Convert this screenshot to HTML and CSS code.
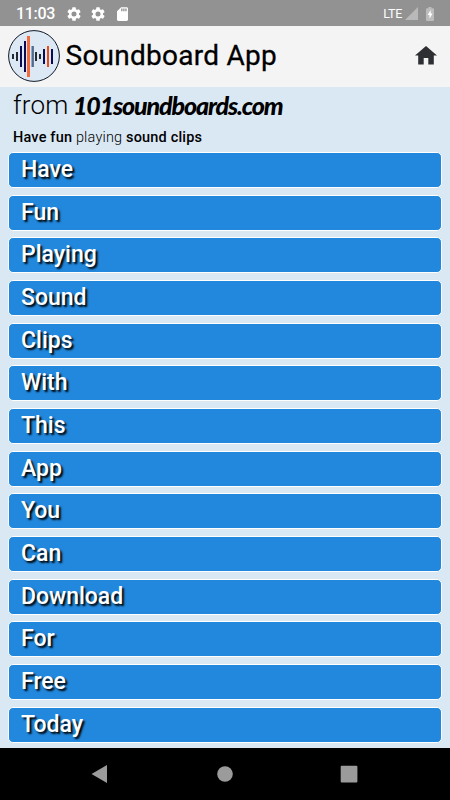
FILE: index.html
```html
<!DOCTYPE html>
<html lang="en">
<head>
<meta charset="utf-8">
<title>Soundboard App</title>
<link rel="stylesheet" href="styles.css">
</head>
<body>
<div class="status">
  <span class="time">11:03</span>
  <svg class="gear" viewBox="2 2 20 20"><path d="M19.14 12.94c.04-.3.06-.61.06-.94s-.02-.64-.07-.94l2.03-1.58a.49.49 0 0 0 .12-.61l-1.92-3.32a.49.49 0 0 0-.59-.22l-2.39.96a7 7 0 0 0-1.62-.94L14.4 2.81a.48.48 0 0 0-.48-.41h-3.84a.47.47 0 0 0-.47.41l-.36 2.54c-.59.24-1.13.57-1.62.94l-2.39-.96a.48.48 0 0 0-.59.22L2.74 8.87a.47.47 0 0 0 .12.61l2.03 1.58a6 6 0 0 0 0 1.88l-2.03 1.58a.49.49 0 0 0-.12.61l1.92 3.32c.12.22.37.29.59.22l2.39-.96c.5.38 1.03.7 1.62.94l.36 2.54c.05.24.24.41.48.41h3.84c.24 0 .44-.17.47-.41l.36-2.54a7 7 0 0 0 1.62-.94l2.39.96c.22.08.47 0 .59-.22l1.92-3.32a.47.47 0 0 0-.12-.61zM12 15.6a3.6 3.6 0 1 1 0-7.2 3.6 3.6 0 0 1 0 7.2z"/></svg>
  <svg class="gear" viewBox="2 2 20 20"><path d="M19.14 12.94c.04-.3.06-.61.06-.94s-.02-.64-.07-.94l2.03-1.58a.49.49 0 0 0 .12-.61l-1.92-3.32a.49.49 0 0 0-.59-.22l-2.39.96a7 7 0 0 0-1.62-.94L14.4 2.81a.48.48 0 0 0-.48-.41h-3.84a.47.47 0 0 0-.47.41l-.36 2.54c-.59.24-1.13.57-1.62.94l-2.39-.96a.48.48 0 0 0-.59.22L2.74 8.87a.47.47 0 0 0 .12.61l2.03 1.58a6 6 0 0 0 0 1.88l-2.03 1.58a.49.49 0 0 0-.12.61l1.92 3.32c.12.22.37.29.59.22l2.39-.96c.5.38 1.03.7 1.62.94l.36 2.54c.05.24.24.41.48.41h3.84c.24 0 .44-.17.47-.41l.36-2.54a7 7 0 0 0 1.62-.94l2.39.96c.22.08.47 0 .59-.22l1.92-3.32a.47.47 0 0 0-.12-.61zM12 15.6a3.6 3.6 0 1 1 0-7.2 3.6 3.6 0 0 1 0 7.2z"/></svg>
  <svg class="sd" viewBox="4 2 16 20"><path d="M18 2h-8L4 8v12c0 1.100.9 2 2 2h12c1.100 0 2-.9 2-2V4c0-1.100-.9-2-2-2zm-6 6h-2V4h2zm3 0h-2V4h2zm3 0h-2V4h2z"/></svg>
  <span class="lte">LTE</span>
  <svg class="signal" viewBox="0 0 13 13"><path d="M13 0v13H0z"/></svg>
  <svg class="battery" viewBox="0 0 8 14"><path class="cell" d="M2.500 0h3v1.300H7q1 0 1 1V13q0 1-1 1H1q-1 0-1-1V2.300q0-1 1-1h1.500z"/><path class="bolt" d="M4.700 3 1.700 8h1.800v3.700L6.500 6.600H4.700z"/></svg>
</div>
<header class="bar">
  <svg class="logo" viewBox="0 0 52 52">
    <circle cx="26" cy="26" r="25.400" fill="#dce9f5" stroke="#111827" stroke-width="1"/>
    <g fill="#252a32"><rect x="4" y="24" width="2" height="5"/><rect x="8" y="22" width="2" height="9"/><rect x="27" y="22" width="2" height="9"/><rect x="31" y="24" width="2" height="5"/></g>
    <g fill="#0b0b55"><rect x="12" y="16" width="2" height="21"/><rect x="16" y="11" width="2" height="31"/><rect x="35" y="19" width="2" height="15"/><rect x="43" y="19" width="2" height="15"/></g>
    <rect x="19" y="6" width="3" height="41" fill="#f36b3b"/><rect x="23.500" y="16" width="2.400" height="21" fill="#536b8d"/><rect x="39" y="16" width="2" height="21" fill="#ed4c14"/>
  </svg>
  <h1>Soundboard App</h1>
  <svg class="home" viewBox="0 0 22 19"><path d="M11 0 22 9.500H18.800V18.500H13.300V12H8.700v6.500H3.200V9.500H0z"/></svg>
</header>
<main>
  <div class="from"><span class="light">from</span><span class="brand">101soundboards.com</span></div>
  <p class="tagline"><b>Have fun</b> playing <b>sound clips</b></p>
  <div class="list">
    <div class="clip"><span>Have</span></div>
    <div class="clip"><span>Fun</span></div>
    <div class="clip"><span>Playing</span></div>
    <div class="clip"><span>Sound</span></div>
    <div class="clip"><span>Clips</span></div>
    <div class="clip"><span>With</span></div>
    <div class="clip"><span>This</span></div>
    <div class="clip"><span>App</span></div>
    <div class="clip"><span>You</span></div>
    <div class="clip"><span>Can</span></div>
    <div class="clip"><span>Download</span></div>
    <div class="clip"><span>For</span></div>
    <div class="clip"><span>Free</span></div>
    <div class="clip"><span>Today</span></div>
  </div>
</main>
<nav>
  <svg viewBox="0 0 18 18"><path d="M15 0v18L-.5 9z"/></svg>
  <svg viewBox="0 0 18 18"><circle cx="9" cy="9" r="7.800"/></svg>
  <svg viewBox="0 0 18 18"><rect x=".7" y=".7" width="16.700" height="16.700" rx="1"/></svg>
</nav>
</body>
</html>
```

FILE: styles.css
```css
* { box-sizing: border-box; }
body { margin: 0; width: 450px; height: 800px; display: flex; flex-direction: column; overflow: hidden; font-family: Roboto, sans-serif; color: #000; background: #dae8f4; }
svg { display: block; flex: none; overflow: visible; }
.status { height: 26px; flex: none; display: flex; align-items: center; background: #929292; color: #fff; fill: #fff; padding: 1px 16px 0; }
.time { font-size: 16px; font-weight: 500; width: 51px; letter-spacing: -.3px; }
.gear { width: 14px; height: 14px; margin-right: 10px; }
.sd { width: 11px; height: 14px; margin-left: 2px; }
.lte { margin-left: auto; font-size: 12.500px; letter-spacing: -.3px; margin-right: 3px; }
.signal { width: 13px; height: 13px; fill: #b9b9b9; margin-right: 8px; }
.battery { width: 8px; height: 14px; }
.cell { fill: #bcbcbc; }
.bolt { fill: #fff; }
.bar { height: 61px; flex: none; display: flex; align-items: center; background: #f4f4f4; padding: 0 13px 2px 7.500px; }
.logo { width: 52px; height: 52px; }
h1 { margin: 0 0 0 6px; font-size: 28px; line-height: 34px; font-weight: 400; -webkit-text-stroke: .3px #000; letter-spacing: .25px; white-space: nowrap; }
.home { width: 22px; height: 19px; margin-left: auto; fill: #2d2f33; }
main { flex: 1; padding: 0 8px; min-height: 0; background: #dae8f4; }
.from { display: flex; height: 38px; align-items: center; padding-left: 5px; white-space: nowrap; }
.light { position: relative; top: -1px; font-size: 26px; font-weight: 300; letter-spacing: .2px; width: 60px; }
.brand { position: relative; top: -1px; font-family: Lato, sans-serif; font-weight: 900; font-style: italic; font-size: 25px; letter-spacing: -1.150px; }
.tagline { margin: 0; padding-left: 5px; height: 27px; line-height: 25px; font-size: 14.500px; font-weight: 300; letter-spacing: .18px; white-space: nowrap; }
.tagline b { font-weight: 500; }
.list { display: flex; flex-direction: column; gap: 6.680px; }
.clip { height: 36px; flex: none; border: 1px solid #fff; border-radius: 5px; background: #2288dd; color: #fff; display: flex; align-items: center; padding-left: 12px; font-size: 23px; line-height: 30px; font-weight: 500; letter-spacing: 0; text-shadow: 2px 2px 2px #000; }
nav { height: 52px; flex: none; background: #000; display: flex; align-items: center; justify-content: center; gap: 106px; fill: #9b9b9b; }
nav svg { width: 18px; height: 18px; }
```
